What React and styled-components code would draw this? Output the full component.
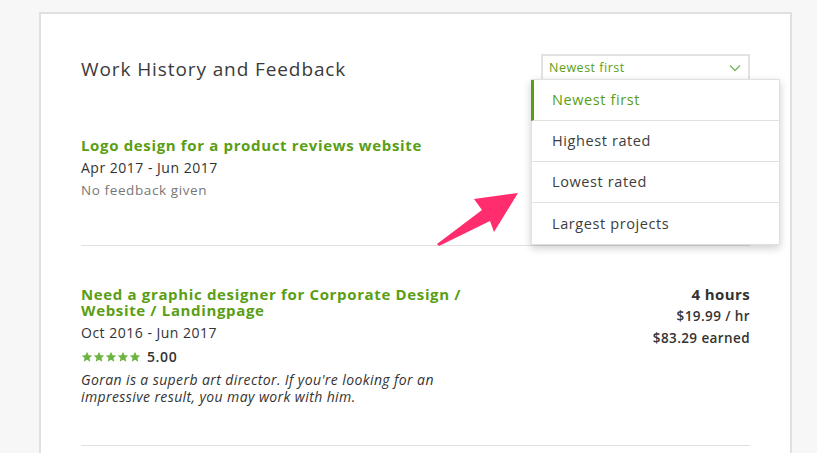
import React from "react";
import styled, { createGlobalStyle } from "styled-components";

const GlobalStyle = createGlobalStyle`
    body {
        margin: 0;
        background-color: #f7f7f7;
        font-family: "Open Sans", "Noto Sans", sans-serif;
        color: #333;
    }
`;

const options = ["Newest first", "Highest rated", "Lowest rated", "Largest projects"];

const Stars = () => (
    <StarRow>
        {[0, 1, 2, 3, 4].map((i) => (
            <svg key={i} width="12" height="12" viewBox="0 0 24 24">
                <path fill="#6db33f" d="M12 1.5l3.1 6.9 7.4.7-5.6 5 1.7 7.4L12 17.6l-6.6 3.9 1.7-7.4-5.6-5 7.4-.7z" />
            </svg>
        ))}
    </StarRow>
);

const App = () => {
    return (
        <>
            <GlobalStyle />
            <Page>
                <Card>
                    <Header>
                        <Title>Work History and Feedback</Title>
                        <SelectWrap>
                            <SelectBox>
                                <span>Newest first</span>
                                <svg width="12" height="8" viewBox="0 0 12 8">
                                    <path d="M1 1.5l5 5 5-5" fill="none" stroke="#7ab55c" strokeWidth="1.3" />
                                </svg>
                            </SelectBox>
                            <Menu>
                                {options.map((o, i) => (
                                    <MenuItem key={o} $active={i === 0}>{o}</MenuItem>
                                ))}
                            </Menu>
                        </SelectWrap>
                    </Header>

                    <Job $first>
                        <JobMain>
                            <JobTitle>Logo design for a product reviews website</JobTitle>
                            <JobDate>Apr 2017 - Jun 2017</JobDate>
                            <NoFeedback>No feedback given</NoFeedback>
                        </JobMain>
                    </Job>

                    <Job>
                        <JobMain>
                            <JobTitle>Need a graphic designer for Corporate Design / Website / Landingpage</JobTitle>
                            <JobDate>Oct 2016 - Jun 2017</JobDate>
                            <Rating>
                                <Stars />
                                <Score>5.00</Score>
                            </Rating>
                            <Feedback>Goran is a superb art director. If you're looking for an impressive result, you may work with him.</Feedback>
                        </JobMain>
                        <JobStats>
                            <Hours>4 hours</Hours>
                            <Stat>$19.99 / hr</Stat>
                            <Stat>$83.29 earned</Stat>
                        </JobStats>
                    </Job>

                    <Pointer width="90" height="60" viewBox="0 0 90 60">
                        <polygon fill="#ff2d6e" points="0,52 45,18 37,7 81,1 57,40 53,29 2,54" />
                    </Pointer>
                </Card>
            </Page>
        </>
    );
};

const Page = styled.div`
    padding: 12px 25px 0 39px;
    height: 441px;
    overflow: hidden;
`;

const Card = styled.div`
    position: relative;
    background-color: #fff;
    border: 2px solid #e0e0e0;
    border-bottom: none;
    padding: 40px 40px 0 40px;
    min-height: 500px;
`;

const Header = styled.div`
    display: flex;
    justify-content: space-between;
    align-items: center;
    height: 25px;
`;

const Title = styled.h2`
    margin: 5px 0 0 0;
    font-size: 19px;
    font-weight: 400;
    color: #3a3a3a;
    letter-spacing: 0.9px;
`;

const SelectWrap = styled.div`
    position: relative;
`;

const SelectBox = styled.div`
    display: flex;
    align-items: center;
    justify-content: space-between;
    box-sizing: border-box;
    width: 209px;
    height: 26px;
    padding: 0 7px 0 6px;
    border: 2px solid #e2e2e2;
    border-bottom: none;
    font-size: 12.5px;
    letter-spacing: 0.5px;
    color: #5a9e14;
`;

const Menu = styled.div`
    position: absolute;
    top: 25px;
    left: -10px;
    width: 247px;
    background-color: #fff;
    border: 1px solid #e0e0e0;
    box-shadow: 0 3px 8px rgba(0, 0, 0, 0.2);
    z-index: 2;
`;

const MenuItem = styled.div`
    box-sizing: border-box;
    height: 41px;
    display: flex;
    align-items: center;
    padding-left: 18px;
    font-size: 14.5px;
    letter-spacing: 0.6px;
    color: ${(p) => (p.$active ? "#5a9e14" : "#3d3d3d")};
    border-left: 3px solid ${(p) => (p.$active ? "#5a9e14" : "transparent")};
    border-bottom: 1px solid #e0e0e0;
    margin-left: -1px;
    &:last-child {
        border-bottom: none;
    }
`;

const Job = styled.div`
    display: flex;
    justify-content: space-between;
    align-items: flex-start;
    padding: ${(p) => (p.$first ? "58px 0 46px" : "40px 0 40px")};
    border-bottom: 1px solid #e0e0e0;
`;

const JobMain = styled.div`
    display: flex;
    flex-direction: column;
    max-width: 392px;
`;

const JobTitle = styled.div`
    font-size: 15px;
    font-weight: 700;
    line-height: 16px;
    letter-spacing: 0.65px;
    color: #5a9e14;
`;

const JobDate = styled.div`
    margin-top: 6px;
    font-size: 14px;
    line-height: 17px;
    letter-spacing: 0.5px;
    color: #333;
`;

const NoFeedback = styled.div`
    margin-top: 6px;
    font-size: 13.5px;
    line-height: 17px;
    letter-spacing: 0.6px;
    color: #777;
`;

const Rating = styled.div`
    display: flex;
    align-items: center;
    gap: 6px;
    margin-top: 6px;
`;

const StarRow = styled.div`
    display: flex;
`;

const Score = styled.span`
    font-size: 14px;
    font-weight: 600;
    letter-spacing: 0.6px;
    color: #333;
`;

const Feedback = styled.div`
    margin-top: 5px;
    font-size: 14px;
    font-style: italic;
    line-height: 17px;
    letter-spacing: 0.4px;
    color: #333;
`;

const JobStats = styled.div`
    display: flex;
    flex-direction: column;
    align-items: flex-end;
    color: #333;
`;

const Hours = styled.div`
    font-size: 15px;
    font-weight: 700;
    line-height: 17px;
    letter-spacing: 0.4px;
`;

const Stat = styled.div`
    margin-top: 5px;
    font-size: 13.5px;
    font-weight: 600;
    line-height: 17px;
    letter-spacing: 0.4px;
`;

const Pointer = styled.svg`
    position: absolute;
    left: 396px;
    top: 178px;
    z-index: 3;
`;

export default App;
